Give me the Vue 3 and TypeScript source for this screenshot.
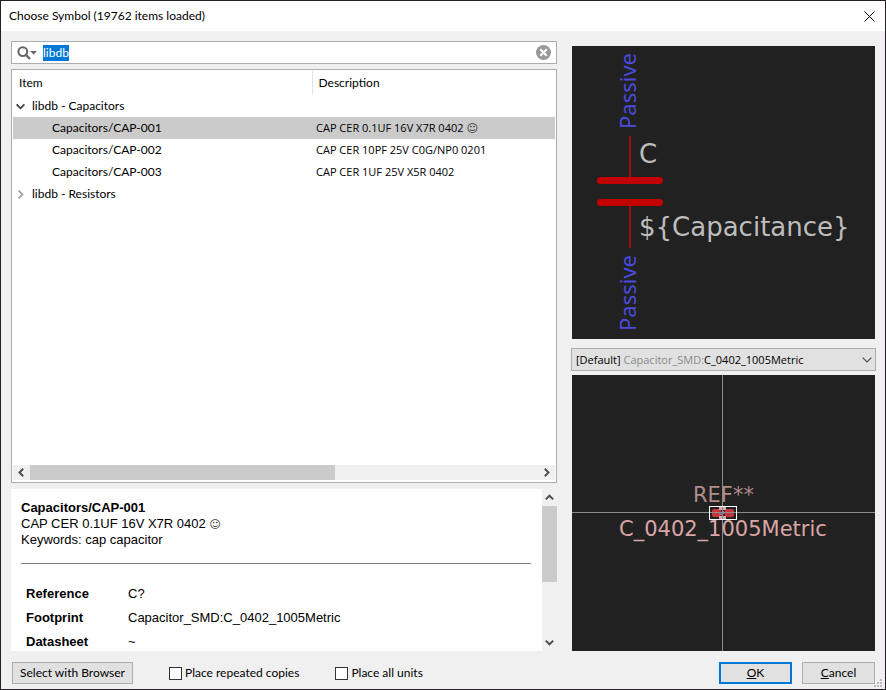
<script setup lang="ts">
import { onMounted, ref } from 'vue'

interface Part { name: string; description: string; favourite?: boolean }
interface Library { name: string; open: boolean; parts: Part[] }
interface Field { label: string; value: string }

const query = ref('libdb')
const searchBox = ref<HTMLInputElement | null>(null)
const selected = ref('Capacitors/CAP-001')
const repeated = ref(false)
const allUnits = ref(false)

const libraries = ref<Library[]>([
  {
    name: 'libdb - Capacitors',
    open: true,
    parts: [
      { name: 'Capacitors/CAP-001', description: 'CAP CER 0.1UF 16V X7R 0402', favourite: true },
      { name: 'Capacitors/CAP-002', description: 'CAP CER 10PF 25V C0G/NP0 0201' },
      { name: 'Capacitors/CAP-003', description: 'CAP CER 1UF 25V X5R 0402' },
    ],
  },
  { name: 'libdb - Resistors', open: false, parts: [] },
])

const fields: Field[] = [
  { label: 'Reference', value: 'C?' },
  { label: 'Footprint', value: 'Capacitor_SMD:C_0402_1005Metric' },
  { label: 'Datasheet', value: '~' },
]

onMounted(() => {
  searchBox.value?.focus()
  searchBox.value?.select()
})
</script>

<template>
  <div class="dialog" role="dialog" aria-labelledby="dialog-title">
    <header class="titlebar">
      <h1 id="dialog-title">Choose Symbol (19762 items loaded)</h1>
      <button class="close" type="button" aria-label="Close">
        <svg width="11" height="11" viewBox="0 0 11 11"><path d="M.5 .5l10 10M10.5 .5l-10 10" /></svg>
      </button>
    </header>

    <main class="content">
      <section class="left">
        <div class="search">
          <button class="search-menu" type="button" aria-label="Search options">
            <svg width="20" height="14" viewBox="0 0 20 14">
              <circle cx="5.8" cy="5.6" r="4.4" fill="none" stroke="#666" stroke-width="2" />
              <path d="M9 9l4 4" stroke="#666" stroke-width="2.4" />
              <path d="M13 5h7l-3.5 3.6z" fill="#666" />
            </svg>
          </button>
          <input ref="searchBox" v-model="query" type="text" aria-label="Filter" spellcheck="false" />
          <button class="clear" type="button" aria-label="Clear filter" @click="query = ''">
            <svg width="15" height="15" viewBox="0 0 15 15">
              <circle cx="7.5" cy="7.5" r="7.5" fill="#999" />
              <path d="M4.3 4.3l6.4 6.4M10.7 4.3l-6.4 6.4" stroke="#fff" stroke-width="2" />
            </svg>
          </button>
        </div>

        <div class="tree">
          <table role="treegrid">
            <thead>
              <tr><th class="item" scope="col">Item</th><th scope="col">Description</th></tr>
            </thead>
            <tbody>
              <template v-for="lib in libraries" :key="lib.name">
                <tr>
                  <td class="library" colspan="2">
                    <button class="expander" type="button" :aria-expanded="lib.open" @click="lib.open = !lib.open">
                      <svg v-if="lib.open" width="9" height="9" viewBox="0 0 9 9"><path d="M.6 2.4l3.9 3.9 3.9-3.9" stroke="#404040" stroke-width="1.8" /></svg>
                      <svg v-else width="9" height="9" viewBox="0 0 9 9"><path d="M2.6 .6l3.9 3.9-3.9 3.9" stroke="#a6a6a6" stroke-width="1.8" /></svg>
                      {{ lib.name }}
                    </button>
                  </td>
                </tr>
                <template v-if="lib.open">
                  <tr v-for="part in lib.parts" :key="part.name" :class="{ selected: part.name === selected }" @click="selected = part.name">
                    <td class="part">{{ part.name }}</td>
                    <td class="description">{{ part.description }} <span v-if="part.favourite" class="smile">☺</span></td>
                  </tr>
                </template>
              </template>
            </tbody>
          </table>
          <div class="hscroll">
            <button type="button" aria-label="Scroll left"><svg width="7" height="9" viewBox="0 0 7 9"><path d="M5.2 .8l-3.7 3.7 3.7 3.7" /></svg></button>
            <div class="track"><div class="thumb"></div></div>
            <button type="button" aria-label="Scroll right"><svg width="7" height="9" viewBox="0 0 7 9"><path d="M1.8 .8l3.7 3.7-3.7 3.7" /></svg></button>
          </div>
        </div>

        <div class="details">
          <article>
            <h2>Capacitors/CAP-001</h2>
            <p>CAP CER 0.1UF 16V X7R 0402 <span class="smile">☺</span></p>
            <p>Keywords: cap capacitor</p>
            <hr />
            <table class="fields">
              <tbody>
                <tr v-for="field in fields" :key="field.label">
                  <th scope="row">{{ field.label }}</th>
                  <td>{{ field.value }}</td>
                </tr>
              </tbody>
            </table>
          </article>
          <div class="vscroll">
            <button type="button" aria-label="Scroll up"><svg width="9" height="7" viewBox="0 0 9 7"><path d="M.8 5.4l3.7-3.7 3.7 3.7" /></svg></button>
            <div class="track"><div class="thumb"></div></div>
            <button type="button" aria-label="Scroll down"><svg width="9" height="7" viewBox="0 0 9 7"><path d="M.8 1.6l3.7 3.7 3.7-3.7" /></svg></button>
          </div>
        </div>
      </section>

      <section class="right">
        <div class="preview symbol">
          <svg viewBox="572 46 303 293" role="img" aria-label="Symbol preview">
            <path d="M630 136v44M630 204v44" stroke="#9a0f12" stroke-width="2" />
            <path d="M600.500 180.500h59M600.500 202.500h59" stroke="#c20000" stroke-width="7" stroke-linecap="round" />
            <g class="pin" fill="#4b4bdc" font-size="22">
              <text transform="translate(636 129) rotate(-90)">Passive</text>
              <text transform="translate(636 331) rotate(-90)">Passive</text>
            </g>
            <g fill="#bdbdbd" font-size="26">
              <text x="639" y="163">C</text>
              <text x="639" y="236">${Capacitance}</text>
            </g>
          </svg>
        </div>

        <div class="footprint-select">
          <select aria-label="Footprint">
            <option>[Default] Capacitor_SMD:C_0402_1005Metric</option>
          </select>
          <span class="choice" aria-hidden="true">[Default] <i>Capacitor_SMD:</i>C_0402_1005Metric</span>
          <svg width="10" height="6" viewBox="0 0 10 6"><path d="M.7 .7l4.300 4.300 4.300-4.300" /></svg>
        </div>

        <div class="preview footprint">
          <svg viewBox="572 375 303 276" role="img" aria-label="Footprint preview">
            <text x="693" y="502" font-size="21" fill="#b08c8c">REF**</text>
            <text x="619" y="536" font-size="21" fill="#d9a6a6">C_0402_1005Metric</text>
            <rect x="712" y="509" width="9" height="8" rx="2" fill="#c8343a" />
            <rect x="725" y="509" width="9" height="8" rx="2" fill="#c8343a" />
            <path d="M721 510h4v7h-4z" fill="#541c24" />
            <path d="M719 507h7v3h-7zM719 516h7v3h-7z" fill="#d8a9a9" />
            <path d="M719 514h3l2-3M721 515l5-3" stroke="#8484c4" fill="none" />
            <path d="M572 512.500h303M722.500 375v276" stroke="#8c8c8c" fill="none" />
            <rect x="709.500" y="506.500" width="27" height="13" fill="none" stroke="#fff" />
          </svg>
        </div>
      </section>
    </main>

    <footer class="footer">
      <button class="push browser" type="button">Select with Browser</button>
      <label><input v-model="repeated" type="checkbox" />Place repeated copies</label>
      <label><input v-model="allUnits" type="checkbox" />Place all units</label>
      <button class="push ok" type="button"><span><u>O</u>K</span></button>
      <button class="push cancel" type="button"><span><u>C</u>ancel</span></button>
      <svg class="grip" width="8" height="8" viewBox="0 0 8 8" aria-hidden="true">
        <path d="M6 0h2v2H6zM3 3h2v2H3zM6 3h2v2H6zM0 6h2v2H0zM3 6h2v2H3zM6 6h2v2H6z" fill="#bcbcbc" />
      </svg>
    </footer>
  </div>
</template>

<style>
body { margin: 0; }
</style>

<style scoped>
* { box-sizing: border-box; }
.dialog {
  display: flex;
  flex-direction: column;
  min-height: 100vh;
  border: 1px solid #231f24;
  background: #f0f0f0;
  color: #000;
  font: 12px/16px "Segoe UI", Lato, sans-serif;
}
button, input, select { font: inherit; color: inherit; }
button { padding: 0; border: 0; background: none; }
h1, h2, p { margin: 0; font: inherit; }
svg { display: block; }

.titlebar {
  display: flex;
  align-items: center;
  justify-content: space-between;
  height: 30px;
  padding: 0 10px 0 8px;
  background: #fff;
}
.close svg { fill: none; stroke: #000; }

.content {
  flex: 1;
  display: grid;
  grid-template-columns: 546fr 305fr;
  gap: 14px;
  padding: 10px 9px 0 10px;
}
.left, .right { display: flex; flex-direction: column; min-width: 0; }

.search {
  display: flex;
  align-items: center;
  height: 23px;
  padding: 0 5px;
  border: 1px solid #abadb3;
  background: #fff;
}
.search-menu { margin-right: 6px; }
.search input {
  flex: 1;
  min-width: 0;
  padding: 0;
  border: 0;
  outline: 0;
  background: none;
}
.search input::selection { background: #0078d7; color: #fff; }

.tree {
  flex: 1;
  display: flex;
  flex-direction: column;
  justify-content: space-between;
  margin-top: 5px;
  padding: 1px;
  border: 1px solid #abadb3;
  background: #fff;
}
.tree table { width: 100%; border-collapse: collapse; table-layout: fixed; }
.tree th { height: 24px; padding: 0 6px; font-weight: 400; text-align: left; }
.tree th.item { width: 299px; border-right: 1px solid #e5e5e5; }
.tree td { height: 22px; padding: 0; white-space: nowrap; }
.tree td.part { padding-left: 39px; }
.tree td.description { padding-left: 4px; }
.tree td.description, .choice { font-family: "Segoe UI", "Open Sans", sans-serif; font-size: 11px; }
.selected td { background: #cbcbcb; }
.expander { display: flex; align-items: center; gap: 7px; padding-left: 3px; }
.expander svg { fill: none; }
.smile { color: #333; font-size: 11px; font-family: "DejaVu Sans", sans-serif; line-height: 1; }

.hscroll { display: flex; height: 15px; background: #f0f0f0; margin-bottom: 1px; }
.vscroll { display: flex; flex-direction: column; width: 15px; }
.hscroll button { display: grid; place-items: center; width: 17px; }
.vscroll button { display: grid; place-items: center; height: 17px; }
.hscroll path, .vscroll path { fill: none; stroke: #505050; stroke-width: 2; }
.track { flex: 1; }
.hscroll .thumb { width: 60%; height: 100%; background: #cbcbcb; }
.vscroll .thumb { width: 100%; height: 59%; background: #cbcbcb; }

.details {
  display: flex;
  height: 162px;
  margin-top: 6px;
  overflow: hidden;
  font: 13px/16px "Liberation Sans", Arial, sans-serif;
}
article { flex: 1; padding: 11px 11px 0 10px; background: #fff; }
h2 { font-weight: 700; }
hr { height: 1px; margin: 15px 0 18px; border: 0; background: #808080; }
.fields { border-collapse: collapse; }
.fields th { width: 107px; height: 24px; padding: 0 0 0 5px; text-align: left; }
.fields td { padding: 0; }

.right { padding: 5px 0 0; }
.preview { margin: 0 1px; background: #212121; min-height: 0; }
.preview svg { width: 100%; height: 100%; font-family: "DejaVu Sans", sans-serif; }
.pin { font-family: "Noto Sans", sans-serif; }
.symbol { flex: 293 1 0; }
.footprint { flex: 276 1 0; }
.footprint-select { position: relative; margin: 9px 0 4px; }
.footprint-select select {
  display: block;
  width: 100%;
  height: 23px;
  padding: 0 20px 0 4px;
  border: 1px solid #adadad;
  border-radius: 0;
  background: #e1e1e1;
  color: transparent;
  appearance: none;
}
.choice { position: absolute; left: 5px; top: 4px; pointer-events: none; white-space: nowrap; }
.choice i { color: #8a8a8a; font-style: normal; }
.footprint-select svg { position: absolute; right: 4px; top: 9px; fill: none; stroke: #505050; stroke-width: 1.2; pointer-events: none; }

.footer {
  position: relative;
  display: flex;
  align-items: center;
  padding: 11px 10px 5px 11px;
}
.push { min-width: 73px; height: 22px; border: 1px solid #adadad; background: #e1e1e1; }
.push.browser { width: 121px; }
.push.ok { margin-left: auto; border: 2px solid #0078d7; }
.push.cancel { margin-left: 10px; }
.footer label { display: flex; align-items: center; gap: 3px; margin-left: 36px; }
.footer input {
  width: 13px;
  height: 13px;
  margin: 0;
  border: 1px solid #333;
  background: #fff;
  appearance: none;
}
.grip { position: absolute; right: 3px; bottom: 2px; }
</style>
